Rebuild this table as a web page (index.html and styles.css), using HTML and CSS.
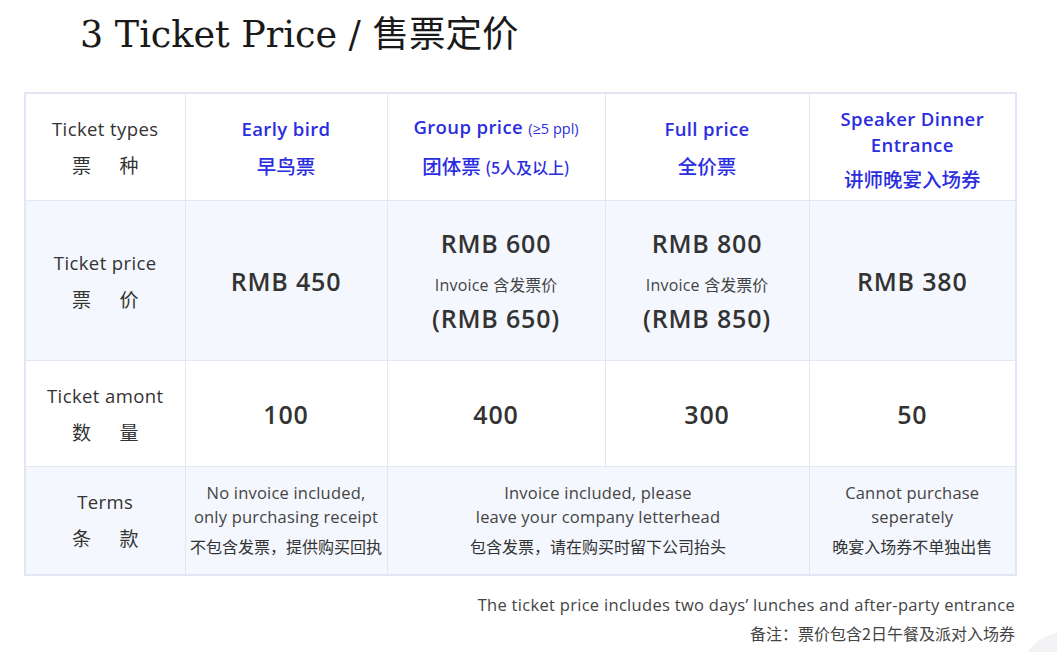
FILE: index.html
```html
<!DOCTYPE html>
<html lang="zh">
<head>
<meta charset="utf-8">
<link rel="stylesheet" href="styles.css">
</head>
<body>
<div class="page">
  <h1 class="title">3 Ticket Price / 售票定价</h1>
  <table class="prices">
    <colgroup>
      <col class="c1"><col class="c2"><col class="c3"><col class="c4"><col class="c5">
    </colgroup>
    <tr class="row-head">
      <td class="label"><div>Ticket types</div><div class="zh sp">票&emsp;&ensp;种</div></td>
      <td class="blue"><div>Early bird</div><div class="zh">早鸟票</div></td>
      <td class="blue"><div>Group price <span class="small">(≥5 ppl)</span></div><div class="zh">团体票 <span class="small2">(5人及以上)</span></div></td>
      <td class="blue"><div>Full price</div><div class="zh">全价票</div></td>
      <td class="blue tight"><div>Speaker Dinner</div><div>Entrance</div><div class="zh">讲师晚宴入场券</div></td>
    </tr>
    <tr class="row-price shade">
      <td class="label"><div>Ticket price</div><div class="zh sp">票&emsp;&ensp;价</div></td>
      <td class="big">RMB 450</td>
      <td><div class="big">RMB 600</div><div class="inv">Invoice <span class="zh">含发票价</span></div><div class="big last">(RMB 650)</div></td>
      <td><div class="big">RMB 800</div><div class="inv">Invoice <span class="zh">含发票价</span></div><div class="big last">(RMB 850)</div></td>
      <td class="big">RMB 380</td>
    </tr>
    <tr class="row-amount">
      <td class="label"><div>Ticket amont</div><div class="zh sp">数&emsp;&ensp;量</div></td>
      <td class="big">100</td>
      <td class="big">400</td>
      <td class="big">300</td>
      <td class="big">50</td>
    </tr>
    <tr class="row-terms shade">
      <td class="label"><div>Terms</div><div class="zh sp">条&emsp;&ensp;款</div></td>
      <td class="terms"><div>No invoice included,</div><div>only purchasing receipt</div><div class="zh">不包含发票，提供购买回执</div></td>
      <td class="terms" colspan="2"><div>Invoice included, please</div><div>leave your company letterhead</div><div class="zh">包含发票，请在购买时留下公司抬头</div></td>
      <td class="terms"><div>Cannot purchase</div><div>seperately</div><div class="zh">晚宴入场券不单独出售</div></td>
    </tr>
  </table>
  <div class="note">
    <p>The ticket price includes two days’ lunches and after-party entrance</p>
    <p class="zh">备注：票价包含2日午餐及派对入场券</p>
  </div>
  <div class="corner"></div>
</div>
</body>
</html>
```
FILE: styles.css
```css
html, body {
  margin: 0;
  padding: 0;
  background: #ffffff;
}
body {
  font-family: "Open Sans", "Noto Sans CJK SC", sans-serif;
  color: #333333;
  width: 1057px;
  height: 652px;
  overflow: hidden;
}
.page {
  position: relative;
  overflow: hidden;
  box-sizing: border-box;
  padding: 13px 0 0 24px;
  height: 652px;
}
.title {
  margin: 0 0 35px 56px;
  font-family: "DejaVu Serif", "Noto Sans CJK SC", serif;
  font-weight: normal;
  font-size: 36.5px;
  line-height: 44px;
  color: #1a1a1a;
}
.prices {
  border-collapse: collapse;
  table-layout: fixed;
  width: 992px;
  border: 2px solid #e3e5f5;
}
.c1 { width: 160px; }
.c2 { width: 202px; }
.c3 { width: 218px; }
.c4 { width: 204px; }
.c5 { width: 207px; }
.prices td {
  border: 1px solid #e4e6f3;
  text-align: center;
  vertical-align: middle;
  padding: 0;
}
.shade td { background: #f4f7fd; }
.row-head { height: 107px; }
.row-price { height: 160px; }
.row-amount { height: 106px; }
.row-terms { height: 108px; }
.label {
  font-size: 18.5px;
  letter-spacing: 0.4px;
  line-height: 36px;
  color: #333;
}
.label .sp { font-size: 19px; letter-spacing: 0; }
.zh { font-family: "Noto Sans CJK SC", sans-serif; letter-spacing: 0; }
.blue {
  color: #2b2de0;
  font-weight: 600;
  font-size: 18.5px;
  letter-spacing: 0.4px;
  line-height: 37px;
}
.blue .zh { font-weight: 500; font-size: 19.5px; }
.prices td.blue.tight {
  vertical-align: top;
  line-height: 26px;
  padding-top: 12px;
}
.blue.tight .zh { line-height: 42px; }
.small {
  font-size: 14.5px;
  font-weight: normal;
  letter-spacing: 0;
}
.small2 {
  font-size: 16px;
  font-weight: 500;
}
.big {
  font-size: 25px;
  font-weight: 600;
  letter-spacing: 0.8px;
  line-height: 36px;
  color: #333;
}
.inv {
  font-size: 16px;
  letter-spacing: 0.2px;
  line-height: 36px;
  margin-top: 5px;
  color: #444;
}
.inv .zh { font-size: 16px; }
.big.last { margin-top: -3px; }
.prices td.terms {
  font-size: 16.5px;
  letter-spacing: 0.2px;
  line-height: 24px;
  padding-top: 4px;
  color: #444;
}
.terms .zh {
  font-size: 16px;
  line-height: 34px;
  color: #333;
}
.note {
  width: 991px;
  text-align: right;
  font-size: 16.5px;
  letter-spacing: 0.3px;
  color: #444;
  margin-top: 14px;
}
.note p {
  margin: 0;
  line-height: 29px;
}
.note .zh { font-size: 16px; }
.corner {
  position: absolute;
  right: -60px;
  bottom: -80px;
  width: 100px;
  height: 100px;
  border-radius: 50%;
  background: #f3f3f5;
}
```
